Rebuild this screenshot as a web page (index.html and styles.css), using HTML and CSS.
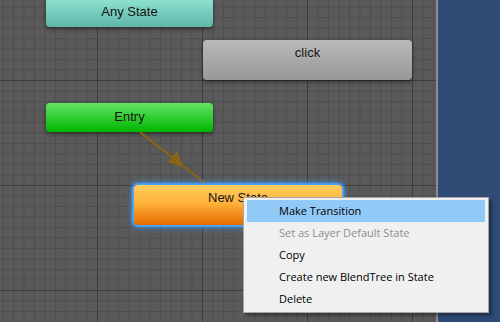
FILE: index.html
```html
<!DOCTYPE html>
<html lang="en">
<head>
	<meta charset="UTF-8">
	<title>Animator</title>
	<link rel="stylesheet" href="styles.css">
</head>
<body>
	<div class="window">
		<!-- state machine graph -->
		<div class="graph">
			<div class="node any">Any State</div>
			<div class="node sub">click</div>
			<div class="node entry">Entry</div>

			<svg class="links" width="436" height="322" viewBox="0 0 436 322">
				<line x1="140" y1="132" x2="206" y2="184" stroke="#8c6512" stroke-width="2"/>
				<polygon points="183,167 168,162 177,151" fill="#8c6512"/>
			</svg>

			<div class="node state selected">New State</div>

			<ul class="menu">
				<li class="hover">Make Transition</li>
				<li class="disabled">Set as Layer Default State</li>
				<li>Copy</li>
				<li>Create new BlendTree in State</li>
				<li>Delete</li>
			</ul>
		</div>
		<div class="split"></div>
		<div class="inspector"></div>
	</div>
</body>
</html>
```

FILE: styles.css
```css
*{box-sizing: border-box;}
html, body{
	margin: 0;
	height: 100%;
	overflow: hidden;
}
.window{
	display: flex;
	height: 322px;
	width: 500px;
}
.graph{
	position: relative;
	flex: 0 0 436px;
	background-color: #5a5a5a;
	background-image:
		linear-gradient(to right, #3d3d3d 1px, transparent 1px),
		linear-gradient(to bottom, #3d3d3d 1px, transparent 1px),
		linear-gradient(to right, #4f4f4f 1px, transparent 1px),
		linear-gradient(to bottom, #4f4f4f 1px, transparent 1px);
	background-size: 105px 105px, 105px 105px, 10.5px 10.5px, 10.5px 10.5px;
	background-position: 97px 0, 0 80px, 2.5px 0, 0 6.5px;
}
.split{
	flex: 0 0 2px;
	background: #8c8c8c;
}
.inspector{
	flex: 1;
	background: #2f4b76;
}

.node{
	position: absolute;
	border-radius: 4px;
	font-family: "Liberation Sans", Arial, sans-serif;
	font-size: 13px;
	color: #141414;
	text-align: center;
	box-shadow: 0 2px 4px rgba(0,0,0,.45);
}
.any{
	left: 46px; top: -2px;
	width: 167px; height: 29px;
	line-height: 27px;
	background: linear-gradient(#8fe3d0, #5fb7a9);
}
.entry{
	left: 46px; top: 103px;
	width: 167px; height: 29px;
	line-height: 28px;
	background: linear-gradient(#62e462, #00b500);
}
.sub{
	left: 203px; top: 40px;
	width: 209px; height: 40px;
	padding-top: 5px;
	background: linear-gradient(#bababa, #979797);
}
.state{
	left: 134px; top: 185px;
	width: 208px; height: 40px;
	padding-top: 5px;
	background: linear-gradient(#ffcd60, #ffb23a 45%, #e46c00);
}
.selected{
	box-shadow: 0 0 2px 2px #4ba6ff, 0 0 6px 3px rgba(60,150,255,.6);
}
.links{
	position: absolute;
	left: 0; top: 0;
}

.menu{
	position: absolute;
	left: 243px; top: 197px;
	width: 246px;
	margin: 0;
	padding: 2px 3px;
	list-style: none;
	background: #f0f0f0;
	border: 1px solid #a7a7a7;
	box-shadow: 3px 3px 3px rgba(0,0,0,.35);
	font-family: "Open Sans", "Noto Sans", sans-serif;
	font-size: 11px;
	color: #000;
}
.menu li{
	height: 22px;
	line-height: 22px;
	padding-left: 32px;
}
.menu .hover{background: #91c9f7;}
.menu .disabled{color: #8d8d8d;}
```
